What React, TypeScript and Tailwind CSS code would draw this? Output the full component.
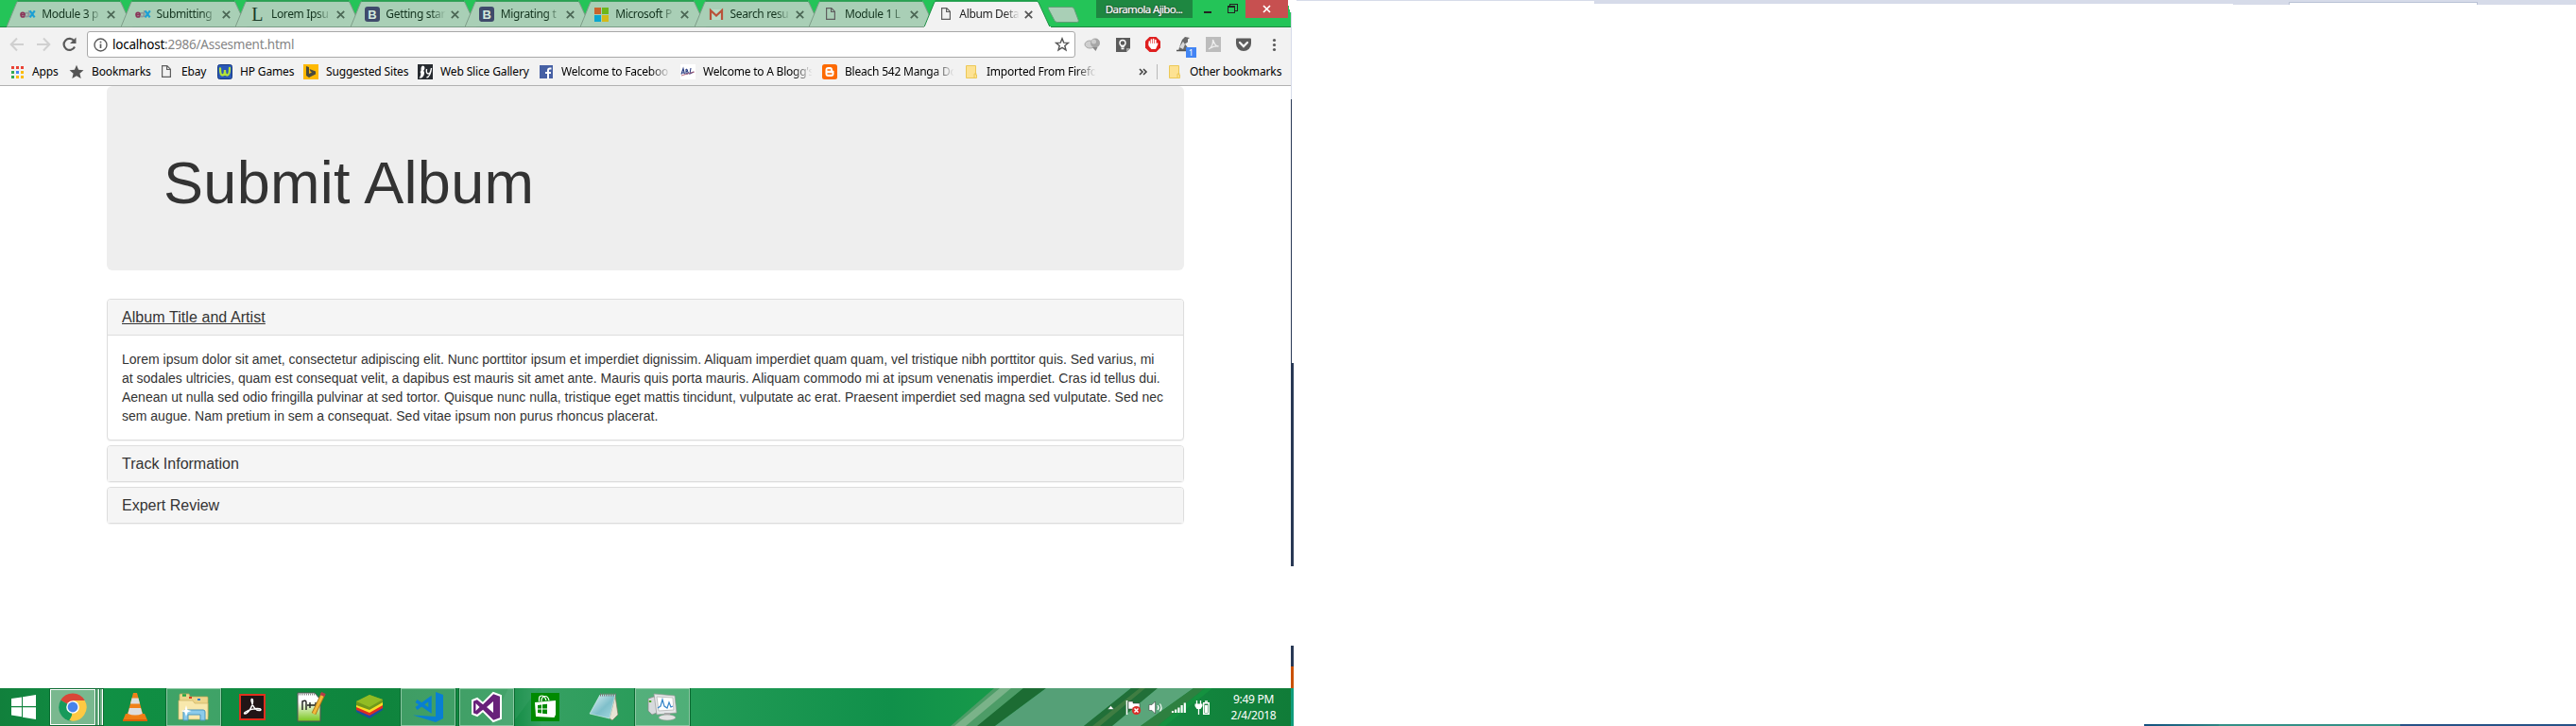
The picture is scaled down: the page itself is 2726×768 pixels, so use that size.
import type { ReactNode } from "react";

const PageIcon = () => (
  <svg width="16" height="16" viewBox="0 0 16 16" fill="none" stroke="#5f5f5f" strokeWidth="1.2">
    <path d="M3.6 1.6h5.2l3.6 3.6v8.2H3.6zM8.6 1.8v3.7h3.8" />
  </svg>
);

const EdxIcon = () => (
  <svg width="17" height="16" viewBox="0 0 17 16" fill="none" strokeWidth="1.7">
    <g stroke="#8d9a9c"><circle cx="7.3" cy="8.6" r="2" /><path d="M9.7 4v7.200" /></g>
    <path d="M5.200 10.400Q1 12.200 1 8.600 1 6.400 3 6.400 5 6.400 5 8.600H1.500" stroke="#8b3559" />
    <path d="M10.600 4.400l5 7M15.800 4.400l-5.200 7" stroke="#1c9fd4" strokeWidth="2.200" />
  </svg>
);

const LetterL = () => (
  <span className="w-4 text-center font-['Liberation_Serif',serif] text-[20px] leading-4 text-[#1b3b29]">L</span>
);

const BootstrapIcon = () => (
  <span className="flex size-4 items-center justify-center rounded-[3px] bg-[#3f4a6b] font-['Liberation_Sans',sans-serif] text-[13px] leading-none font-bold text-[#d4e8dd]">
    B
  </span>
);

const MsIcon = () => (
  <span className="grid size-[15px] grid-cols-2 gap-px">
    <i className="bg-[#c9632c]" />
    <i className="bg-[#6cb71b]" />
    <i className="bg-[#0ba6cf]" />
    <i className="bg-[#d3bb18]" />
  </span>
);

const GmailIcon = () => (
  <svg width="16" height="16" viewBox="0 0 16 16">
    <path d="M1 3h14v11H1z" fill="#b9dbc7" />
    <path d="M2 14V4l6 5.5L14 4v10" fill="none" stroke="#b9523a" strokeWidth="2.2" />
  </svg>
);

const tabs: { icon: ReactNode; title: string; active?: boolean }[] = [
  { icon: <EdxIcon />, title: "Module 3 p" },
  { icon: <EdxIcon />, title: "Submitting" },
  { icon: <LetterL />, title: "Lorem Ipsu" },
  { icon: <BootstrapIcon />, title: "Getting star" },
  { icon: <BootstrapIcon />, title: "Migrating t" },
  { icon: <MsIcon />, title: "Microsoft P" },
  { icon: <GmailIcon />, title: "Search resu" },
  { icon: <PageIcon />, title: "Module 1 L" },
  { icon: <PageIcon />, title: "Album Deta", active: true },
];

const Tab = ({ icon, title, active }: { icon: ReactNode; title: string; active?: boolean }) => (
  <div className="relative h-[29px] w-[121.4px] shrink-0">
    <svg className="absolute top-0 left-0" width="134" height="29" viewBox="0 0 134 29">
      <path
        d="M0 28.6 L10.5 3 Q11.3 1 13 1 H118.5 Q120.4 1 121.2 3 L133 28.6 Z"
        fill={active ? "#f2f2f2" : "#a9cfb6"}
        stroke={active ? "#1d8f44" : "#7d9c88"}
        strokeWidth="1"
      />
      <path d="M11.5 1H120" stroke="#1a9d47" strokeWidth="1.4" />
      {active && <path d="M0 28.5H134" stroke="#f2f2f2" />}
    </svg>
    <div className="relative flex h-[29px] items-center pt-px pl-[14.500px]">
      <span className="flex w-[17px] justify-center">{icon}</span>
      <span
        className={`ml-1.5 w-[65px] text-[12px] tracking-[-0.35px] whitespace-nowrap [mask-image:linear-gradient(90deg,#000_74%,transparent_98%)] ${active ? "text-[#222]" : "text-[#14341f]"}`}
      >
        {title}
      </span>
      <svg className="ml-[4px]" width="9" height="9" viewBox="0 0 9 9">
        <path d="M.8 .8l7.4 7.4M8.2 .8L.8 8.2" stroke={active ? "#555" : "#4a6654"} strokeWidth="1.7" />
      </svg>
    </div>
  </div>
);

const TitleBar = () => (
  <div className="flex h-[29px] w-[1366px] border-b border-[#1d8840] bg-[#24c458] pl-[6.7px]">
    {tabs.map((t) => (
      <Tab key={t.title} {...t} />
    ))}
    <svg className="relative ml-[5.400px] shrink-0" width="38" height="28" viewBox="0 0 38 28">
      <path d="M5 7.5h24q2 0 2.800 2l4.500 12q.5 2-1.500 2h-21q-2 0-3-2L4.500 9.500q-.8-2 .5-2z" fill="#a9cfb6" stroke="#5f9f76" />
    </svg>
    <div className="ml-[17px] flex h-[19px] w-[102px] shrink-0 items-center justify-center bg-[#1e8741] text-[11.500px] tracking-[-0.65px] whitespace-nowrap text-white [text-shadow:0_0_2px_#000,0_0_1px_#fff]">
      Daramola Ajibo...
    </div>
    <div className="flex h-[19px] w-[56px] shrink-0 items-center">
      <svg width="56" height="19" viewBox="0 0 56 19" fill="none" stroke="#222" shapeRendering="crispEdges">
        <path d="M12 12.500h8" strokeWidth="2" />
        <path d="M37.500 6.500h7v7h-7zM39.500 6V4.500h8v7H45M37 7h8" />
      </svg>
    </div>
    <div className="flex h-[19px] w-[45px] shrink-0 items-center justify-center bg-[#c75050]">
      <svg width="9" height="9" viewBox="0 0 9 9">
        <path d="M1 1l7 7M8 1L1 8" stroke="#fff" strokeWidth="1.700" />
      </svg>
    </div>
    <svg width="3" height="13" viewBox="0 0 3 13" className="shrink-0">
      <path d="M0 0h3v13H2V10H1V6H0z" fill="#fff" />
    </svg>
  </div>
);

const Toolbar = () => (
  <div className="flex h-[33px] items-start bg-[#f2f2f2] pt-1">
    <svg width="92" height="28" viewBox="0 0 92 28" fill="none" strokeWidth="2" className="shrink-0">
      <g stroke="#d0d0d0">
        <path d="M25 14H12M18 7.500L11.700 14l6.300 6.500M39 14h13M46 7.500l6.300 6.500-6.300 6.500" />
      </g>
      <path d="M78.500 10.500A6 6 0 1 0 79 16.500" stroke="#5a5a5a" strokeWidth="2.200" />
      <path d="M80.500 6.500v6.500H74z" fill="#5a5a5a" />
    </svg>
    <div className="flex h-7 w-[1046px] shrink-0 items-center rounded-[3px] border border-[#a8a8a8] bg-white pl-1.5">
      <svg width="15" height="15" viewBox="0 0 15 15" fill="none" stroke="#5a5a5a" strokeWidth="1.400">
        <circle cx="7.500" cy="7.500" r="6.500" />
        <path d="M7.500 6.500V11M7.500 3.700v1.600" strokeWidth="1.700" />
      </svg>
      <span className="ml-[5px] flex-1 text-[13.500px] tracking-[-0.22px] text-[#858585]">
        <span className="text-black">localhost</span>:2986/Assesment.html
      </span>
      <svg className="mr-[5px]" width="16" height="16" viewBox="0 0 16 16">
        <path d="M8 1.800l1.700 4.300 4.700.3-3.600 3 1.200 4.500L8 11.400 4 13.900l1.200-4.500-3.600-3 4.700-.3z" fill="none" stroke="#555" strokeWidth="1.400" />
      </svg>
    </div>
    <svg width="228" height="29" viewBox="1138 33 228 29" className="shrink-0">
      <g transform="translate(1156 47)">
        <ellipse cx="-2.500" cy="0" rx="5.500" ry="4" fill="#cfcfcf" stroke="#a5a5a5" />
        <circle cx="3" cy="-1.500" r="5" fill="#a6a6a6" />
        <circle cx="1.500" cy="-3" r="2.500" fill="#ccc" />
        <path d="M0 3l3.500 4 2-4z" fill="#888" />
      </g>
      <g transform="translate(1188 47)">
        <path d="M-7-7H8V4L4 8H-7z" fill="#5b5b5b" />
        <path d="M4 8V4h4z" fill="#a2a2a2" />
        <circle cx="0" cy="-1.500" r="3" fill="none" stroke="#fff" strokeWidth="1.400" />
        <path d="M-1.700 2.500h3.400M-1.500 4.500h3" stroke="#fff" strokeWidth="1.500" />
      </g>
      <g transform="translate(1220 47)">
        <path d="M-3.500-8h7L8-3.500v7L3.500 8h-7L-8 3.500v-7z" fill="#df1f1f" />
        <path d="M-3.700 0v-3M-1.600-1v-4M.6-1v-4.500M2.800-1v-3.500" stroke="#fff" strokeWidth="1.600" strokeLinecap="round" />
        <path d="M-4.500-1h8L5-1.800 5.500-.5 3 5H-1.500L-4.500 1.500z" fill="#fff" />
      </g>
      <g transform="translate(1252 47)">
        <path d="M-1-5L2-8l5 1-2 1.500 0 3-3 2 3 4-1 3.500h-9l1-4z" fill="#696969" />
        <path d="M0-3l-4 6 4 2 2-5z" fill="#d8d8d8" />
        <path d="M-7 6.500h11" stroke="#555" strokeWidth="1.500" />
        <rect x="3" y="3" width="11" height="11" fill="#4285f4" />
      </g>
      <text x="1257.800" y="59" fill="#fff" fontSize="9" fontFamily="Noto Sans">1</text>
      <g transform="translate(1284 47)">
        <rect x="-8" y="-8" width="16" height="16" fill="#bcbcbc" />
        <path d="M-5 5C-1 3 0-2-.5-5c2 5 3 7 6 7-5-1-7 1-10.500 3" fill="none" stroke="#eee" strokeWidth="1.300" />
      </g>
      <g transform="translate(1316 47)">
        <path d="M-8-5.500q0-1 1-1H7q1 0 1 1V-1A8 8 0 0 1-8-1z" fill="#5c5c5c" />
        <path d="M-4-2L0 2l4-4" fill="none" stroke="#f2f2f2" strokeWidth="2.400" strokeLinecap="round" />
      </g>
      <g fill="#5a5a5a">
        <circle cx="1348.500" cy="42.500" r="1.600" />
        <circle cx="1348.500" cy="47.500" r="1.600" />
        <circle cx="1348.500" cy="52.500" r="1.600" />
      </g>
    </svg>
  </div>
);

const AppsIcon = () => (
  <span className="grid size-[13px] grid-cols-3 gap-[2px]">
    {["bg-[#ea4335]", "bg-[#ea4335]", "bg-[#ea4335]", "bg-[#34a853]", "bg-[#4285f4]", "bg-[#fbbc05]", "bg-[#34a853]", "bg-[#fbbc05]", "bg-[#fbbc05]"].map((c, i) => (
      <i key={i} className={c} />
    ))}
  </span>
);

const StarIcon = () => (
  <svg width="16" height="16" viewBox="0 0 16 16">
    <path d="M8 .8l2.100 5 5.400.4-4.100 3.500 1.300 5.300L8 12.200 3.300 15l1.300-5.300L.5 6.200l5.400-.4z" fill="#555" />
  </svg>
);

const FolderIcon = () => (
  <svg width="14" height="16" viewBox="0 0 14 16">
    <path d="M1.500 1.500h10v9.500h1v3.500h-11z" fill="#fde293" stroke="#ecc857" />
    <path d="M10 14v-4h2.500" fill="none" stroke="#ecc857" />
  </svg>
);

const bookmarks: { icon: ReactNode; label: string; cls: string; fade?: boolean }[] = [
  { icon: <AppsIcon />, label: "Apps", cls: "w-[63px]" },
  { icon: <StarIcon />, label: "Bookmarks", cls: "w-[95px]" },
  { icon: <PageIcon />, label: "Ebay", cls: "w-[62px]" },
  {
    icon: (
      <svg width="16" height="16" viewBox="0 0 16 16">
        <rect x=".5" y=".5" width="15" height="15" rx="2" fill="#2a58b8" stroke="#173a80" />
        <path d="M3 4.500q0 7 2.500 7T8 6q0 5.500 2.500 5.500T13 4" fill="none" stroke="#b5e238" strokeWidth="2.300" strokeLinecap="round" />
      </svg>
    ),
    label: "HP Games", cls: "w-[91px]",
  },
  {
    icon: (
      <svg width="16" height="16" viewBox="0 0 16 16">
        <path d="M0 0h16v16H0z" fill="#ffb900" />
        <path d="M3 2l3 1v7l3-1.500-1.500-1L6.500 5 13 7.500v3L6 14l-3-2z" fill="#4b4b3c" />
      </svg>
    ),
    label: "Suggested Sites", cls: "w-[121px]",
  },
  {
    icon: (
      <svg width="16" height="16" viewBox="0 0 16 16">
        <path d="M0 0h16v16H0z" fill="#272b30" />
        <path d="M5 1.500C8 1.500 8 5 6 7c2 1 1 6-2 7.500H1.500C4 12 3.500 9 2.500 8 5 7 2 4 5 1.500z" fill="#fff" />
        <path d="M9.500 5q-1 5 2 5 2 0 3-6-1 9-5 10" fill="none" stroke="#fff" strokeWidth="1.400" />
      </svg>
    ),
    label: "Web Slice Gallery", cls: "w-[128px]",
  },
  {
    icon: (
      <svg width="14" height="14" viewBox="0 0 14 14">
        <path d="M0 0h14v14H0z" fill="#4660a4" />
        <path d="M9 14V5.500Q9 3.500 11 3.500h1.500M6 8h6" fill="none" stroke="#fff" strokeWidth="2" />
      </svg>
    ),
    label: "Welcome to Faceboo", cls: "w-[150px]", fade: true,
  },
  {
    icon: (
      <svg width="16" height="16" viewBox="0 0 16 16" fill="none">
        <path d="M0 0h16v16H0z" fill="#fff" />
        <path d="M1 10.500l2-6 1.500 6M1.500 9h3M6 5v5h1.500q2-1.500-.5-2.500 1.500-1.500-1-2.500M11 4l-1 6 4-2" stroke="#2d3f82" strokeWidth="1.100" />
        <path d="M1 12q8-2.500 14-4" stroke="#b3566b" strokeWidth=".8" />
      </svg>
    ),
    label: "Welcome to A Blogg's", cls: "w-[150px]", fade: true,
  },
  {
    icon: (
      <svg width="16" height="16" viewBox="0 0 16 16">
        <rect width="16" height="16" rx="2.500" fill="#fd6a02" />
        <path d="M3.500 6q0-3 3-3H8.500q2.500 0 2.500 3 0 1 1.500 1v3q0 3-3 3h-3q-3 0-3-3z" fill="#fff" />
        <path d="M6 6h2.500M6 10h4" stroke="#fd6a02" strokeWidth="1.500" strokeLinecap="round" />
      </svg>
    ),
    label: "Bleach 542 Manga Do", cls: "w-[150px]", fade: true,
  },
  { icon: <FolderIcon />, label: "Imported From Firefo", cls: "w-[150px]", fade: true },
];

const BookmarksBar = () => (
  <div className="flex h-[29px] items-center border-b border-[#b1b1b1] bg-[#f2f2f2] pl-[10px] text-[12px] tracking-[-0.14px] text-black">
    {bookmarks.map((b) => (
      <div key={b.label} className={`flex shrink-0 items-center gap-2 ${b.cls}`}>
        <span className="flex w-4 shrink-0 justify-center">{b.icon}</span>
        <span
          className={`whitespace-nowrap ${b.fade ? "w-[118px] tracking-[-0.22px] [mask-image:linear-gradient(90deg,#000_80%,transparent_98%)]" : ""}`}
        >
          {b.label}
        </span>
      </div>
    ))}
    <svg className="ml-[35px]" width="10" height="9" viewBox="0 0 10 9" fill="none" stroke="#444" strokeWidth="1.600">
      <path d="M1 1l3 3-3 3M5 1l3 3-3 3" />
    </svg>
    <span className="ml-[9px] h-4 w-px bg-[#b9b9b9]" />
    <span className="ml-[11px]">
      <FolderIcon />
    </span>
    <span className="ml-[9px] whitespace-nowrap">Other bookmarks</span>
  </div>
);

const Panel = ({ title, underline, children }: { title: string; underline?: boolean; children?: ReactNode }) => (
  <div className="rounded-[4px] border border-[#ddd] bg-white shadow-[0_1px_1px_rgba(0,0,0,0.05)]">
    <div className="rounded-t-[3px] bg-[#f5f5f5] px-[15px] py-[10px]">
      <h4 className={`text-[16px] leading-[17px] ${underline ? "tracking-[0.07px] underline" : ""}`}>{title}</h4>
    </div>
    {children}
  </div>
);

const lines = [
  "Lorem ipsum dolor sit amet, consectetur adipiscing elit. Nunc porttitor ipsum et imperdiet dignissim. Aliquam imperdiet quam quam, vel tristique nibh porttitor quis. Sed varius, mi",
  "at sodales ultricies, quam est consequat velit, a dapibus est mauris sit amet ante. Mauris quis porta mauris. Aliquam commodo mi at ipsum venenatis imperdiet. Cras id tellus dui.",
  "Aenean ut nulla sed odio fringilla pulvinar at sed tortor. Quisque nunc nulla, tristique eget mattis tincidunt, vulputate ac erat. Praesent imperdiet sed magna sed vulputate. Sed nec",
  "sem augue. Nam pretium in sem a consequat. Sed vitae ipsum non purus rhoncus placerat.",
];

const Page = () => (
  <main className="h-[637px] bg-white px-[113px] font-['Liberation_Sans',Arial,sans-serif] text-[#333]">
    <header className="h-[195px] rounded-[6px] bg-[#eee] px-[60px] pt-[68px]">
      <h1 className="text-[63px] leading-[69px] tracking-[0.3px]">Submit Album</h1>
    </header>
    <div className="mt-[30px] flex flex-col gap-[5px]">
      <Panel title="Album Title and Artist" underline>
        <div className="border-t border-[#ddd] p-[15px] text-[14px] leading-5">
          {lines.map((l) => (
            <p key={l} className="whitespace-nowrap">{l}</p>
          ))}
        </div>
      </Panel>
      <Panel title="Track Information" />
      <Panel title="Expert Review" />
    </div>
  </main>
);

const Slot = ({ tile, children }: { tile?: boolean; children: ReactNode }) => (
  <div
    className={`mr-1 flex h-[40px] w-[58px] shrink-0 items-center justify-center ${tile ? "border border-[#8cc8a3] bg-white/20 outline outline-[#0a6a31] -outline-offset-0" : ""}`}
  >
    {children}
  </div>
);

const Taskbar = () => (
  <footer className="relative h-10 w-[1366px] overflow-hidden bg-[#118a42]">
    <svg className="absolute inset-0" width="1366" height="40" viewBox="0 0 1366 40">
      <defs>
        <linearGradient id="tb" x1="0" x2="1">
          <stop offset="0" stopColor="#11803c" />
          <stop offset=".08" stopColor="#109044" />
          <stop offset=".3" stopColor="#0f843d" />
          <stop offset=".398" stopColor="#148c45" />
          <stop offset=".42" stopColor="#36a062" />
          <stop offset=".55" stopColor="#219a55" />
          <stop offset=".69" stopColor="#10904a" />
          <stop offset=".77" stopColor="#179a4a" />
          <stop offset="1" stopColor="#107c38" />
        </linearGradient>
        <linearGradient id="streak" x1="0" x2="1">
          <stop offset="0" stopColor="#7fb78c" stopOpacity="0" />
          <stop offset=".5" stopColor="#7fb78c" />
          <stop offset="1" stopColor="#55a46f" />
        </linearGradient>
      </defs>
      <path d="M0 0h1366v40H0z" fill="url(#tb)" />
      <path d="M570 0h-32l-20 40h22z" fill="#46a972" opacity=".25" />
      <path d="M1052 0h31l-48 40h-29z" fill="#4d9c67" />
      <path d="M1058 0h12l-48 40h-12z" fill="#7ab389" />
      <path d="M1083 0h24l-54 40h-19z" fill="#1c6c33" />
      <path d="M1107 0h90l-50 40h-94z" fill="#55a077" />
      <path d="M1197 0h28l-48 40h-30z" fill="#216f38" />
      <path d="M1206 0h6l-48 40h-8z" fill="#3f7d42" />
      <path d="M1225 0h38l-56 40h-30z" fill="#5aa57a" />
      <path d="M1263 0h12l-50 40h-18z" fill="#2e8040" />
      <path d="M1275 0h8l-50 40h-8z" fill="#14913f" />
    </svg>
    <div className="relative flex h-10 items-center">
      <svg className="ml-3 shrink-0" width="26" height="26" viewBox="0 0 26 26">
        <path d="M0 4l11-1.600V12H0zM12 2.200L26 0v12H12zM0 13.200h11v10L0 21.600zM12 13.200h14V26l-14-2.200z" fill="#fff" />
      </svg>
      <div className="mr-1 ml-[14px] flex h-[40px] w-[58px] shrink-0 gap-px bg-[#0b6b31] p-px">
        <div className="flex w-[50px] items-center justify-center border border-white bg-[#79b88f]">
          <svg width="30" height="30" viewBox="0 0 30 30">
            <path d="M15 15L2.300 7.700A14.600 14.600 0 0 1 27.700 8z" fill="#d94637" />
            <path d="M15 15L2.300 7.700a14.600 14.600 0 0 0 11 22z" fill="#169a5b" />
            <path d="M15 15L13.300 29.600A14.600 14.600 0 0 0 27.700 8H15z" fill="#fdc943" />
            <path d="M21 18.500L13.300 29.600l-2-.6 4-7z" fill="#fdc943" />
            <circle cx="15" cy="15" r="6.800" fill="#fff" />
            <circle cx="15" cy="15" r="5.400" fill="#4683ea" />
          </svg>
        </div>
        <div className="w-[3px] border-r border-white bg-[#79b88f]" />
        <div className="w-[3px] border-r border-white bg-[#79b88f]" />
      </div>
      <Slot>
        <svg width="28" height="32" viewBox="0 0 28 32">
          <path d="M4 23h20l3 7H1z" fill="#ef7d14" />
          <path d="M1 29h26v2H1z" fill="#d9620b" />
          <path d="M12 1h4l6.500 24q-8.500 4-17 0z" fill="#f18118" />
          <path d="M10.500 6.500h7l1.500 6H9z" fill="#dedede" />
          <path d="M8 17h12l1.700 6q-7.700 3-15.400 0z" fill="#dedede" />
        </svg>
      </Slot>
      <Slot tile>
        <svg width="34" height="30" viewBox="0 0 34 30">
          <path d="M2 2q0-1 1-1h9l1 3h18q1 0 1 1v20H2z" fill="#ecd58a" stroke="#c3a757" strokeWidth=".7" />
          <path d="M5 2.500h4" stroke="#24a544" strokeWidth="2.500" />
          <path d="M12 5h3" stroke="#d53c20" strokeWidth="2" />
          <path d="M21 7h3" stroke="#297acb" strokeWidth="2" />
          <path d="M1 8h15l2 3h14v17H1z" fill="#f8e8ac" stroke="#cbb163" strokeWidth=".7" />
          <path d="M6 29V20q0-2 2-2h19q2 0 2 2v9h-5v-6H11v6z" fill="#8bcbea" stroke="#4b97bd" />
          <path d="M9 13l1.500 5 4 1-4 1.500L9 25l-1.500-4.500-4-1.500 4-1z" fill="#fff" />
        </svg>
      </Slot>
      <Slot>
        <svg width="28" height="28" viewBox="0 0 28 28">
          <path d="M1 1h26v26H1z" fill="#211516" stroke="#e0301e" strokeWidth="2" />
          <path d="M6 21c4 0 9-9 8.500-14-.3-2.500-2-2-1.500.5 1 6 5 10.500 9 10 2-.3 1-2-1.500-2-5-.2-10 1.500-13.500 3.500-1.500 1-2 2-1 2z" fill="none" stroke="#fff" strokeWidth="1.400" />
        </svg>
      </Slot>
      <Slot>
        <svg width="32" height="34" viewBox="0 0 32 34">
          <defs>
            <linearGradient id="np" x2="0" y2="1">
              <stop offset=".3" stopColor="#fff" />
              <stop offset="1" stopColor="#79c51d" />
            </linearGradient>
          </defs>
          <path d="M2 2h18l6 7v23H2z" fill="url(#np)" stroke="#555" />
          <path d="M3 3.500h17" stroke="#888" strokeWidth="2" strokeDasharray="1 1" />
          <path d="M7 20v-9q4-2 4 1v8M12 15h6M15 12v6M18 15h6M21 12v6" fill="none" stroke="#222" strokeWidth="1.400" />
          <path d="M29 3L19 24" stroke="#ab7719" strokeWidth="5" />
          <path d="M29 3L19 24" stroke="#f3b83a" strokeWidth="3" />
          <path d="M29.500 2L28 5" stroke="#b33c47" strokeWidth="5" />
        </svg>
      </Slot>
      <Slot>
        <svg width="30" height="28" viewBox="0 0 30 28">
          <path d="M1 16l14-8 14 6v3l-14 9-14-7z" fill="#1c4d9f" />
          <path d="M1 14l14-8 14 6v3l-14 8-14-6z" fill="#df2b21" />
          <path d="M1 11l14-8 14 6v3l-14 8-14-6z" fill="#f9df25" />
          <path d="M1 8l14-7 14 5v3l-14 8-14-5z" fill="#6f991b" />
          <path d="M1 8l14-7 14 5-14 8z" fill="#91bc24" />
        </svg>
      </Slot>
      <Slot tile>
        <svg width="34" height="34" viewBox="0 0 34 34">
          <path d="M25 1l8 3v25l-8 4L1 25.500l24 1.500z" fill="#087fd3" />
          <path d="M4.500 10.500l14.500 10V8L4.500 18.500" fill="none" stroke="#087fd3" strokeWidth="3.400" />
        </svg>
      </Slot>
      <Slot tile>
        <svg width="34" height="34" viewBox="0 0 34 34">
          <path d="M2 10l5-2 6 5L24 2l8 3v24l-8 3-11-11-6 5-5-2z" fill="#68217a" stroke="#fff" strokeWidth="2" />
          <path d="M24 11v12l-7-6zM5.500 13v8l4-4z" fill="#fff" />
        </svg>
      </Slot>
      <Slot>
        <svg width="30" height="30" viewBox="0 0 30 30">
          <path d="M0 0h30v30H0z" fill="#008a00" />
          <path d="M4 10l22-2v15l-1.500 3L5 25z" fill="#fff" />
          <path d="M8.500 9V6q0-3 3-3t4.500 5M11 9V7q1-3.500 4-3.500T19 8" fill="none" stroke="#fff" strokeWidth="1.200" />
          <path d="M7 13l4-.5v4H7zM12 12.300l5-.6v4.800h-5zM7 17.500h4v4L7 21zM12 17.500h5v4.800l-5-.6z" fill="#008a00" />
        </svg>
      </Slot>
      <Slot>
        <svg width="32" height="30" viewBox="0 0 32 30">
          <defs>
            <linearGradient id="pad" x2="1" y2="1">
              <stop stopColor="#e2f3f6" />
              <stop offset=".55" stopColor="#7fbfca" />
              <stop offset="1" stopColor="#a8dbe3" />
            </linearGradient>
          </defs>
          <path d="M28 3l3 20-6 6-3-2z" fill="#e8e3d4" stroke="#857c62" strokeWidth=".7" />
          <path d="M12 2h16l-6 25L1 22z" fill="url(#pad)" stroke="#e2f3f5" strokeWidth=".6" />
          <path d="M12 2h17" stroke="#777" strokeWidth="3" strokeDasharray="1 1" />
        </svg>
      </Slot>
      <Slot tile>
        <svg width="32" height="30" viewBox="0 0 32 30">
          <path d="M1 6l6-2 3 2v15l-5 2-4-4z" fill="#d7dadd" stroke="#888" strokeWidth=".7" />
          <path d="M3 8v2" stroke="#48a820" strokeWidth="2.500" />
          <path d="M7 1l22 2 2 18-21 2z" fill="#e5e7e9" stroke="#9b9b9b" strokeWidth=".7" />
          <path d="M10 4l17 1 1 13-16 1z" fill="#fff" stroke="#c1c1c1" />
          <path d="M11 16l3-2 2-7 2 7 3 2 2-6 2 5 2-1" fill="none" stroke="#3886c9" strokeWidth="1.200" />
          <path d="M18 21h6v4h-6z" fill="#aaa" />
          <ellipse cx="21" cy="26" rx="9" ry="3" fill="#e3e3e3" stroke="#999" strokeWidth=".6" />
        </svg>
      </Slot>
      <svg className="ml-[434px] shrink-0" width="116" height="24" viewBox="0 0 116 24">
        <g transform="translate(0 1)">
          <path d="M4 13.500l3.500-4 3.500 4z" fill="#fff" stroke="#245c36" strokeWidth=".6" />
          <path d="M24.500 4v15" stroke="#fff" strokeWidth="1.600" />
          <path d="M26 5h5v2h7v8h-5v-2h-7z" fill="#fff" stroke="#333" strokeWidth=".5" />
          <circle cx="34.500" cy="14.500" r="4.600" fill="#d92d27" />
          <path d="M32.500 12.500l4 4M36.500 12.500l-4 4" stroke="#fff" strokeWidth="1.500" />
          <path d="M48 8.500h3L54.500 5v13L51 14.500h-3z" fill="#fff" stroke="#333" strokeWidth=".5" />
          <path d="M57 9q2 2.500 0 5M59.500 7.500q3 4 0 8" fill="none" stroke="#fff" strokeWidth="1.200" />
          <path d="M73 17v-2M76.200 17v-3.500M79.400 17v-5.500M82.600 17V9M85.800 17V6.500" stroke="#fff" strokeWidth="2.200" />
          <path d="M98.500 4v4M102.500 4v4M100.500 12v7" stroke="#fff" strokeWidth="1.300" />
          <path d="M96.500 7.500h8V10l-2 3h-4l-2-3z" fill="#fff" />
          <path d="M105.700 6.700h5.600v11.600h-5.600z" fill="#2e8a4e" stroke="#fff" strokeWidth="1.400" />
          <path d="M107 9h3v8h-3z" fill="#fff" />
          <path d="M107 5h3" stroke="#fff" strokeWidth="1.500" />
        </g>
      </svg>
      <div className="ml-[3px] w-[84px] text-center text-[12px] leading-[17px] tracking-[-0.28px] text-white">
        <div>9:49 PM</div>
        <div>2/4/2018</div>
      </div>
    </div>
  </footer>
);

const EdgeStrip = () => (
  <aside className="flex h-[768px] w-[3px] shrink-0 flex-col">
    <div className="mt-[13px] h-[92px] w-px bg-[#d6dbe9]" />
    <div className="h-[279px] w-px bg-[#293955]" />
    <div className="h-[215px] bg-[#293955]" />
    <div className="mt-[84px] h-[22px] bg-[#293955]" />
    <div className="h-[23px] bg-[#ca5100]" />
    <div className="h-10 bg-[#0f9d7c]" />
  </aside>
);

const SecondScreen = () => (
  <section className="flex h-[768px] flex-1 flex-col justify-between bg-white pl-[3px]">
    <div className="flex items-start">
      <div className="h-px w-[315px] bg-[#d6dbe9]" />
      <div className="h-1 w-[676px] bg-[#d6dbe9]" />
      <div className="h-[5px] flex-1 bg-[#d6dbe9] pt-[2px] pl-[59px]">
        <div className="h-[3px] w-[200px] border-x border-t border-[#b9c2d5] bg-white" />
      </div>
    </div>
    <div className="flex h-[2px] justify-end">
      <div className="w-[79px] bg-linear-to-r from-[#155080] to-[#2e8583]" />
      <div className="w-[192px] bg-[#349087]" />
      <div className="w-[186px] bg-[#275287]" />
    </div>
  </section>
);

export default function App() {
  return (
    <div className="flex h-[768px] w-[2726px] overflow-hidden bg-white font-['Noto_Sans','Open_Sans',sans-serif]">
      <div className="flex w-[1366px] shrink-0 flex-col">
        <TitleBar />
        <Toolbar />
        <BookmarksBar />
        <Page />
        <Taskbar />
      </div>
      <EdgeStrip />
      <SecondScreen />
    </div>
  );
}
